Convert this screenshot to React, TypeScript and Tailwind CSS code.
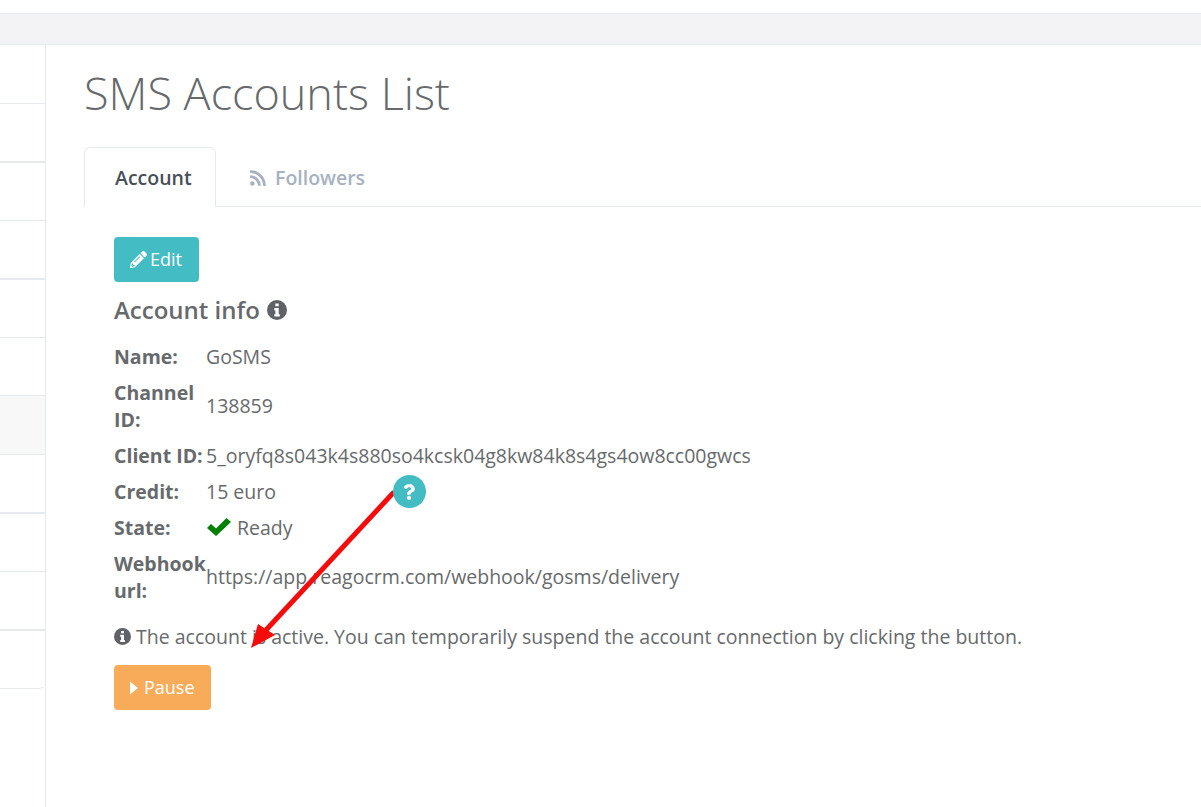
import { FaPencilAlt, FaQuestion, FaRss } from "react-icons/fa";

// sidebar rows: height, bottom border, highlighted
const sideRows = [
  "h-[59px] border-b-2",
  "h-[58px] border-b",
  "h-[59px] border-b-2",
  "h-[58px] border-b",
  "h-[58px] border-b",
  "h-[59px] border-b bg-[#f8f8f8]",
  "h-[59px] border-b-2",
  "h-[58px] border-b",
  "h-[59px] border-b-2",
  "h-[58px] border-b rounded-br-md",
];

function InfoIcon({ size }: { size: number }) {
  return (
    <svg width={size} height={size} viewBox="0 0 20 20" className="shrink-0 text-[#5f6368]">
      <path
        fill="currentColor"
        fillRule="evenodd"
        d="M10 0a10 10 0 1 0 0 20a10 10 0 0 0 0-20ZM8.3 3.4h3.4v2.8H8.3ZM7.3 8h4.4v6.2h1.1v2.4H7.3v-2.4h1.1v-3.8H7.3Z"
      />
    </svg>
  );
}

function InfoRow({ label, children }: { label: string; children: React.ReactNode }) {
  return (
    <tr>
      <th className="w-[92px] p-0 py-[4.5px] text-left font-bold align-middle">{label}</th>
      <td className="p-0 py-[4.5px] align-middle whitespace-nowrap">{children}</td>
    </tr>
  );
}

export default function App() {
  return (
    <div className="h-[807px] w-[1201px] overflow-hidden bg-white font-['Open_Sans',sans-serif] text-[19.5px] leading-[27px] text-[#676a6c] relative">
      {/* top bar */}
      <div className="h-[13px] bg-white" />
      <div className="h-[32px] bg-[#f3f3f5] border-y border-[#e7eaec]" />

      <div className="flex h-[762px]">
        {/* sidebar, only its right edge is visible */}
        <aside className="w-[46px] shrink-0 border-r border-[#e7eaec] pt-[58px]">
          <div className="border-t border-[#e7eaec]">
            {sideRows.map((c, i) => (
              <div key={i} className={`${c} border-[#e7eaec]`} />
            ))}
          </div>
        </aside>

        <main className="flex-1 pl-[38px]">
          <h1 className="mt-[14px] text-[45px] leading-[67px] font-light text-[#676a6c]">SMS Accounts List</h1>

          {/* tabs */}
          <div className="mt-[21px] flex h-[60px] border-b border-[#e7eaec]">
            <div className="flex h-[60px] w-[132px] items-center rounded-t-md border border-b-0 border-[#e7eaec] bg-white pl-[30px] font-semibold text-[#495057]">
              Account
            </div>
            <div className="flex items-center pl-[33px] pt-[2px] gap-[8px] font-semibold text-[#a7b1c2]">
              <FaRss size={18} />
              Followers
            </div>
          </div>

          <div className="pl-[30px] pt-[30px]">
            <button className="flex h-[45px] w-[85px] items-center justify-start gap-[3px] rounded bg-[#44bcc4] pl-[16px] text-[18px] text-white">
              <FaPencilAlt size={17} />
              Edit
            </button>

            <h2 className="mt-[10px] flex items-center gap-[7px] text-[24px] leading-[36px] font-semibold">
              Account info
              <InfoIcon size={20} />
            </h2>

            <table className="mt-[10px] table-fixed border-collapse w-[900px]">
              <tbody>
                <InfoRow label="Name:">GoSMS</InfoRow>
                <InfoRow label="Channel ID:">138859</InfoRow>
                <InfoRow label="Client ID:">5_oryfq8s043k4s880so4kcsk04g8kw84k8s4gs4ow8cc00gwcs</InfoRow>
                <InfoRow label="Credit:">15 euro</InfoRow>
                <InfoRow label="State:">
                  <span className="flex items-center gap-[6px] pl-[1px]">
                    <svg width="24" height="18" viewBox="0 0 24 18" className="text-[#008000]">
                      <path fill="currentColor" d="M0 10L4 6L9 10.5L19.5 0L24 4L9 18Z" />
                    </svg>
                    Ready
                  </span>
                </InfoRow>
                <InfoRow label="Webhook url:">https://app.reagocrm.com/webhook/gosms/delivery</InfoRow>
              </tbody>
            </table>

            <p className="mt-[15px] flex items-center gap-[5px] whitespace-nowrap">
              <InfoIcon size={17} />
              The account is active. You can temporarily suspend the account connection by clicking the button.
            </p>

            <button className="mt-[15px] flex h-[45px] w-[97px] items-center justify-start gap-[6px] rounded bg-[#f8ac59] pl-[16px] text-[18px] text-white">
              <svg width="8" height="14" viewBox="0 0 8 14">
                <path fill="currentColor" d="M0 0.5L8 7L0 13.5Z" />
              </svg>
              Pause
            </button>
          </div>
        </main>
      </div>

      {/* annotation arrow and help marker drawn over the page */}
      <svg className="absolute left-0 top-0 pointer-events-none" width="1201" height="807" viewBox="0 0 1201 807">
        <line x1="394" y1="492" x2="266" y2="630" stroke="#f40b0b" strokeWidth="5" />
        <polygon points="251,648 258,624 275,635" fill="#f40b0b" />
      </svg>
      <div className="absolute left-[393px] top-[475px] flex h-[33px] w-[33px] items-center justify-center rounded-full bg-[#44bcc4] pr-[2px] text-white">
        <FaQuestion size={16} />
      </div>
    </div>
  );
}
